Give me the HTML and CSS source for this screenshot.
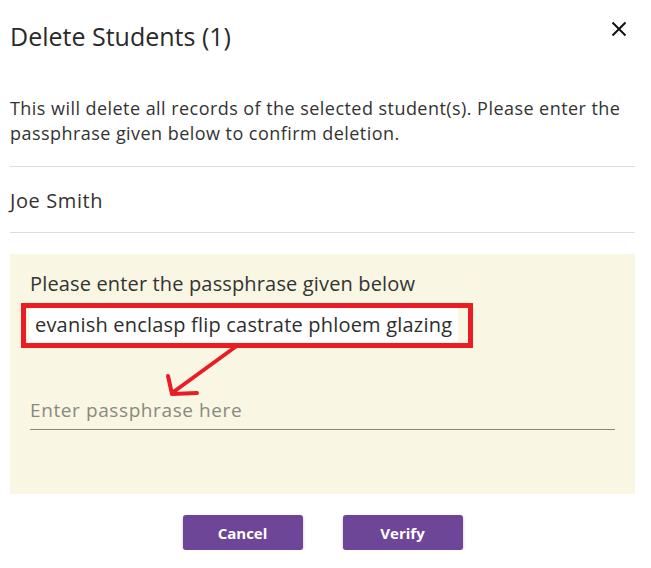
FILE: index.html
```html
<!DOCTYPE html>
<html lang="en">
<head>
<meta charset="utf-8">
<title>Delete Students</title>
<link rel="stylesheet" href="styles.css">
</head>
<body>
<div class="dialog">
  <header class="dialog-header">
    <h1 class="dialog-title">Delete Students (1)</h1>
    <button class="close-btn" aria-label="Close">
      <svg width="16" height="16" viewBox="0 0 16 16"><path d="M1.5 1.5 L14.5 14.5 M14.5 1.5 L1.5 14.5" stroke="#111" stroke-width="2" fill="none"/></svg>
    </button>
  </header>
  <p class="intro">This will delete all records of the selected student(s). Please enter the passphrase given below to confirm deletion.</p>
  <div class="student-list">
    <div class="student">Joe Smith</div>
  </div>
  <section class="confirm-panel">
    <div class="label">Please enter the passphrase given below</div>
    <div class="phrase-wrap">
      <span class="phrase">evanish enclasp flip castrate phloem glazing</span>
      <span class="annot-box"></span>
      <svg class="annot-arrow" width="80" height="60" viewBox="0 0 80 60">
        <path d="M76 3 L10 51 M6 34 L10 52 L35 51" stroke="#ea1c24" stroke-width="4" fill="none" stroke-linecap="round" stroke-linejoin="round"/>
      </svg>
    </div>
    <input class="phrase-input" type="text" placeholder="Enter passphrase here">
  </section>
  <footer class="actions">
    <button class="btn">Cancel</button>
    <button class="btn">Verify</button>
  </footer>
</div>
</body>
</html>
```
FILE: styles.css
```css
* { box-sizing: border-box; }
html, body { margin: 0; padding: 0; background: #fff; }
body {
  font-family: "Open Sans", "Noto Sans", sans-serif;
  color: #333;
}
.dialog {
  padding: 0 16px 0 10px;
}
.dialog-header {
  display: flex;
  justify-content: space-between;
  align-items: flex-start;
  padding-top: 19px;
}
.dialog-title {
  margin: 0;
  font-size: 25px;
  font-weight: 400;
  line-height: 34px;
  color: #2a2a2a;
}
.close-btn {
  border: 0;
  background: none;
  padding: 0;
  margin: 2px 8px 0 0;
  width: 16px;
  height: 16px;
  cursor: pointer;
}
.close-btn svg { display: block; }
.intro {
  margin: 43px 0 0;
  font-size: 18px;
  letter-spacing: 0.45px;
  line-height: 25px;
  color: #333;
}
.student-list {
  margin-top: 20px;
  border-top: 1px solid #ddd;
  border-bottom: 1px solid #ddd;
}
.student {
  font-size: 20px;
  letter-spacing: 0.6px;
  line-height: 25px;
  padding: 21px 0 19px;
}
.confirm-panel {
  margin-top: 21px;
  background: #f9f6e4;
  padding: 17px 20px 64px;
}
.label {
  font-size: 20px;
  letter-spacing: 0.15px;
  line-height: 26px;
  color: #333;
}
.phrase-wrap {
  position: relative;
  margin-top: 11px;
  display: flex;
}
.phrase {
  display: inline-block;
  background: #fff;
  margin-left: -1px;
  padding: 4px 6px;
  font-size: 20px;
  letter-spacing: 0.2px;
  line-height: 26px;
  color: #2e2e2e;
}
.annot-box {
  position: absolute;
  left: -9px;
  top: -5px;
  width: 452px;
  height: 45px;
  border: 5px solid #ea1c24;
}
.annot-arrow {
  position: absolute;
  left: 132px;
  top: 34px;
}
.phrase-input {
  display: block;
  width: 100%;
  margin-top: 55px;
  border: 0;
  border-bottom: 1px solid #8c8874;
  background: transparent;
  font-family: inherit;
  font-size: 19px;
  letter-spacing: 0.6px;
  line-height: 26px;
  padding: 0 0 6px;
  color: #333;
  outline: none;
}
.phrase-input::placeholder { color: #8a897e; }
.actions {
  display: flex;
  justify-content: center;
  gap: 40px;
  padding-top: 21px;
}
.btn {
  width: 120px;
  height: 35px;
  border: 0;
  border-radius: 3px;
  background: #6e4697;
  color: #fff;
  font-family: inherit;
  font-size: 15px;
  font-weight: 700;
  box-shadow: 0 1px 3px rgba(0,0,0,0.25);
  cursor: pointer;
}
```
